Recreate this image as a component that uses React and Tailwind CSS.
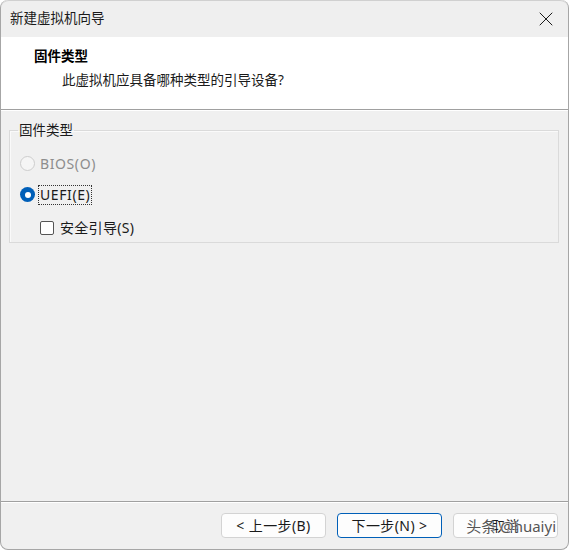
import { X } from "lucide-react";

const font = { fontFamily: '"Noto Sans", "Noto Sans CJK SC", sans-serif' };

function Radio({ checked, disabled }) {
    if (checked) {
        return (
            <span className="w-[15px] h-[15px] rounded-full bg-[#005fb8] flex items-center justify-center">
                <span className="w-[6px] h-[6px] rounded-full bg-white" />
            </span>
        );
    }
    return (
        <span
            className={`w-[15px] h-[15px] rounded-full border ${
                disabled ? "border-[#cdcdcd] bg-[#f5f5f5]" : "border-[#8a8a8a] bg-white"
            }`}
        />
    );
}

function Button({ children, primary }) {
    return (
        <button
            className={`w-[105px] h-[25px] rounded-[4px] border text-[14px] tracking-[0.4px] leading-none text-[#1a1a1a] bg-[#fdfdfd] ${
                primary ? "border-[#005fb8]" : "border-[#d3d3d3]"
            }`}
        >
            {children}
        </button>
    );
}

export default function App() {
    return (
        <div className="w-[570px] h-[551px] bg-white" style={font}>
            <div className="w-[569px] h-[550px] rounded-[8px] border border-t-0 border-[#a6a6a6] overflow-hidden flex flex-col bg-[#f0f0f0]">
                {/* barre de titre */}
                <div className="h-[37px] flex items-center justify-between pl-[9px] pr-[10px] bg-[#efefef] border-t border-[#d0d0d0] rounded-t-[8px]">
                    <span className="text-[13.5px] text-[#1a1a1a] leading-none">新建虚拟机向导</span>
                    <X size={24} strokeWidth={1} className="text-[#1a1a1a]" />
                </div>

                {/* en-tête */}
                <div className="h-[72px] bg-white pt-[9px] flex flex-col gap-[4px]">
                    <div className="pl-[33px] text-[13.5px] font-bold leading-[20px] text-black">固件类型</div>
                    <div className="pl-[61px] text-[13.5px] leading-[20px] text-[#1a1a1a]">此虚拟机应具备哪种类型的引导设备?</div>
                </div>
                <div className="h-[2px] border-t border-[#a0a0a0] bg-white" />

                {/* contenu */}
                <div className="flex-1 flex flex-col">
                    <div className="pt-[9px] pl-[8px] pr-[9px]">
                        <fieldset className="border border-[#dadada] shadow-[inset_1px_1px_0_#fafafa] h-[123px] px-0">
                            <legend className="ml-[8px] px-[1px] text-[13.5px] leading-[20px] text-[#1a1a1a]">固件类型</legend>
                            <div className="flex flex-col pt-[8px] pl-[10px]">
                                <div className="h-[31px] flex items-center gap-[5px]">
                                    <Radio disabled />
                                    <span className="text-[14px] tracking-[0.6px] leading-none text-[#8d8d8d]">BIOS(O)</span>
                                </div>
                                <div className="h-[31px] flex items-center gap-[3px]">
                                    <Radio checked />
                                    <span className="text-[14px] tracking-[0.6px] leading-[18px] text-[#1a1a1a] border border-dotted border-[#333] px-[1px]">UEFI(E)</span>
                                </div>
                                <div className="h-[33px] pt-[2px] flex items-center gap-[6px] pl-[20px]">
                                    <span className="w-[14px] h-[14px] rounded-[2px] border border-[#555] bg-white" />
                                    <span className="text-[14px] tracking-[0.3px] leading-none text-[#1a1a1a]">安全引导(S)</span>
                                </div>
                            </div>
                        </fieldset>
                    </div>
                </div>

                {/* pied */}
                <div className="h-[2px] border-t border-[#a0a0a0] bg-white" />
                <div className="h-[46px] flex items-start justify-end gap-[11px] pt-[10px] pr-[10px] relative">
                    <Button>&lt; 上一步(B)</Button>
                    <Button primary>下一步(N) &gt;</Button>
                    <Button>取消</Button>
                    <span className="absolute right-[12px] top-[13px] text-[15px] leading-[20px] text-[#555] [text-shadow:0_0_2px_#fff,0_0_2px_#fff]">
                        头条 @huaiyi
                    </span>
                </div>
            </div>
        </div>
    );
}
